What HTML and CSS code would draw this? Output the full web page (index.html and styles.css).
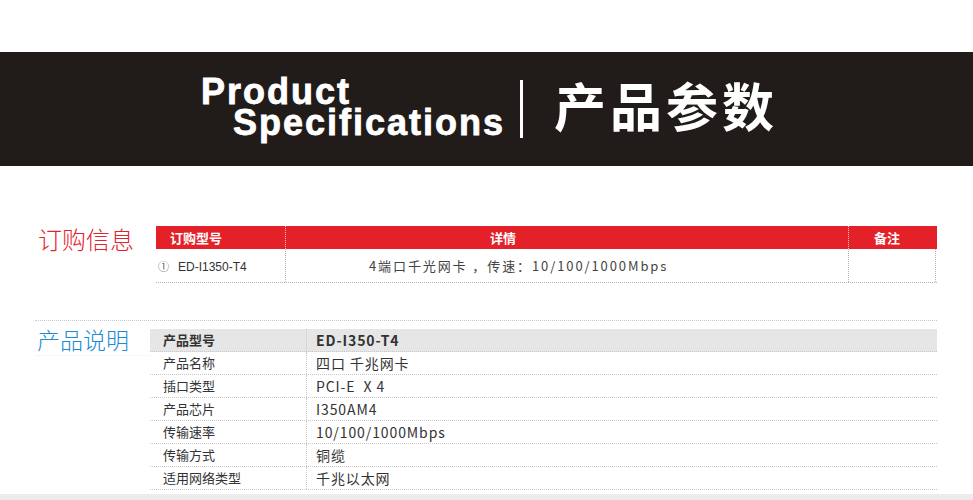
FILE: index.html
```html
<!DOCTYPE html>
<html lang="zh-CN">
<head>
<meta charset="utf-8">
<title>Product Specifications 产品参数</title>
<link rel="stylesheet" href="styles.css">
</head>
<body>
<header class="banner">
  <div class="banner-en">
    <span class="en1">Product</span>
    <span class="en2">Specifications</span>
  </div>
  <div class="banner-bar"></div>
  <div class="banner-cn">产品参数</div>
</header>

<section class="order">
  <h2 class="sec-title red">订购信息</h2>
  <div class="order-table">
    <div class="o-head">
      <div class="oc c1">订购型号</div>
      <div class="oc c2">详情</div>
      <div class="oc c3">备注</div>
    </div>
    <div class="o-row">
      <div class="oc c1"><span class="num">①</span><span class="model">ED-I1350-T4</span></div>
      <div class="oc c2 detail">4端口千光网卡 ，传速：10/100/1000Mbps</div>
      <div class="oc c3"></div>
    </div>
  </div>
</section>

<section class="spec">
  <h2 class="sec-title blue">产品说明</h2>
  <div class="spec-table">
    <div class="s-row first"><div class="sl">产品型号</div><div class="sv">ED-I350-T4</div></div>
    <div class="s-row"><div class="sl">产品名称</div><div class="sv">四口 千兆网卡</div></div>
    <div class="s-row"><div class="sl">插口类型</div><div class="sv">PCI-E&nbsp; X 4</div></div>
    <div class="s-row"><div class="sl">产品芯片</div><div class="sv">I350AM4</div></div>
    <div class="s-row"><div class="sl">传输速率</div><div class="sv">10/100/1000Mbps</div></div>
    <div class="s-row"><div class="sl">传输方式</div><div class="sv">铜缆</div></div>
    <div class="s-row"><div class="sl">适用网络类型</div><div class="sv">千兆以太网</div></div>
  </div>
</section>
<div class="bottom-bar"></div>
</body>
</html>
```

FILE: styles.css
```css
* { box-sizing: border-box; }
html, body { margin: 0; padding: 0; background: #fff; }
body {
  font-family: "Noto Sans CJK SC", "Noto Sans", sans-serif;
  color: #333;
  width: 973px;
  overflow: hidden;
}

/* Banner */
.banner {
  margin-top: 52px;
  height: 114px;
  background: #211c19;
  display: flex;
  align-items: flex-start;
  padding-left: 201px;
}
.banner-en {
  padding-top: 24px;
  font-family: "Liberation Sans", Arial, sans-serif;
  font-weight: 700;
  font-size: 36px;
  line-height: 31px;
  letter-spacing: 2px;
  color: #fff;
  -webkit-text-stroke: 0.8px #fff;
}
.banner-en span { display: block; }
.en2 { margin-left: 32px; }
.banner-bar {
  margin-top: 28px;
  margin-left: 15px;
  width: 3px;
  height: 58px;
  background: #fff;
}
.banner-cn {
  margin-left: 31px;
  padding-top: 27px;
  font-family: "Noto Sans CJK SC", sans-serif;
  font-weight: 700;
  font-size: 52px;
  line-height: 52px;
  letter-spacing: 4px;
  color: #fff;
}

/* Section titles */
.sec-title {
  margin: 0;
  font-weight: 300;
  font-size: 24px;
  line-height: 24px;
  letter-spacing: 0;
}
.red { color: #e3232b; }
.blue { color: #1a8ad2; font-size: 23px; }

/* Order */
.order {
  margin-top: 60px;
  display: flex;
  padding-left: 38px;
}
.order .sec-title { width: 118px; padding-top: 1px; }
.order-table { width: 781px; }
.o-head, .o-row { display: flex; }
.o-head {
  height: 23px;
  background: #e42129;
  color: #fff;
  font-weight: 700;
  font-size: 13px;
  line-height: 23px;
}
.oc.c1 { width: 130px; }
.oc.c2 { width: 563px; }
.oc.c3 { width: 88px; }
.o-head .c1 { padding-left: 14px; border-right: 1px dotted rgba(255,255,255,0.75); }
.o-head .c2 { padding-left: 204px; border-right: 1px dotted rgba(255,255,255,0.75); }
.o-head .c3 { padding-left: 25px; }
.o-row {
  height: 34px;
  border-bottom: 1px dotted #b5b5b5;
  font-size: 13px;
  line-height: 33px;
  color: #444;
}
.o-row .c1 { border-right: 1px dotted #b5b5b5; padding-left: 2px; }
.o-row .c3 { border-left: 1px dotted #b5b5b5; border-right: 1px dotted #b5b5b5; margin-left: -1px; }
.num { font-size: 11px; color: #666; margin-right: 9px; }
.model { font-family: "Liberation Sans", Arial, sans-serif; font-size: 12px; color: #333; }
.detail { padding-left: 83px; letter-spacing: 1.9px; color: #444; }

/* Spec */
.spec {
  margin-top: 37px;
  margin-left: 35px;
  width: 902px;
  border-top: 1px dotted #c8c8c8;
  display: flex;
  padding-top: 5px;
}
.spec .sec-title {
  width: 115px;
  padding-left: 2px;
  padding-top: 1px;
  height: 30px;
  border-bottom: 1px dotted #f0f0f0;
}
.spec-table { width: 787px; margin-top: 3px; }
.s-row {
  display: flex;
  height: 23px;
  border-bottom: 1px dotted #c8c8c8;
  font-size: 13px;
  line-height: 22px;
  color: #333;
}
.s-row.first { background: #e6e6e6; font-weight: 700; }
.sl { width: 157px; padding-left: 13px; border-right: 1px dotted #c8c8c8; }
.sv { padding-left: 9px; font-size: 14px; letter-spacing: 0.9px; }

.bottom-bar {
  margin-top: 4px;
  height: 6px;
  background: #ececec;
}
```
